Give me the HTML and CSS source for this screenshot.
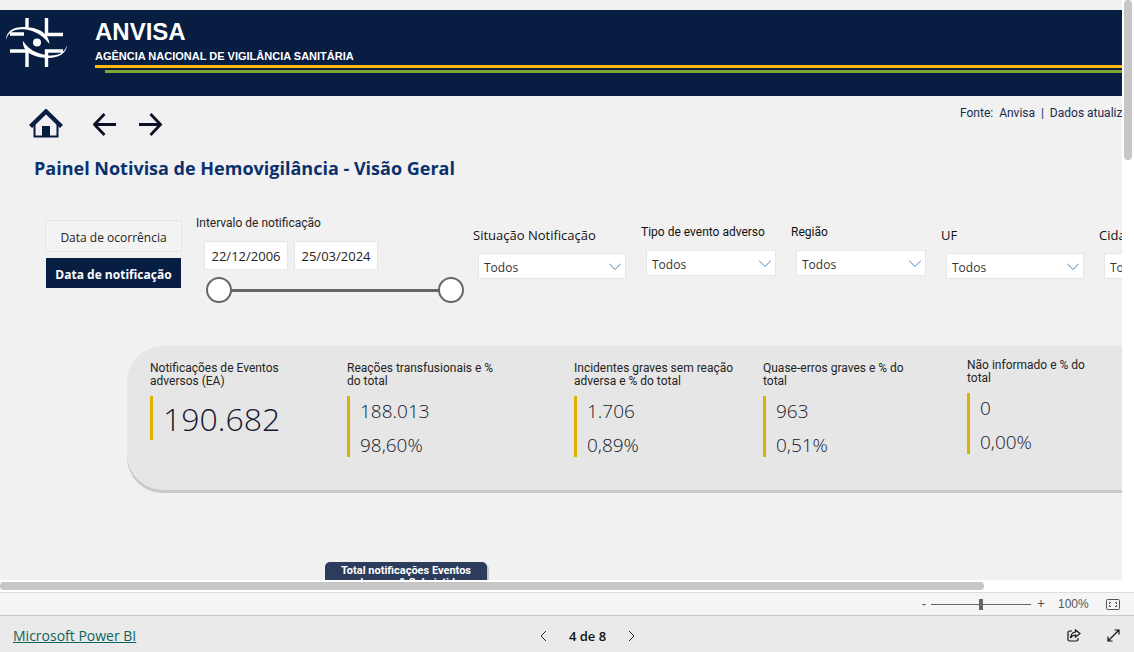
FILE: index.html
```html
<!DOCTYPE html>
<html lang="pt-BR">
<head>
<meta charset="utf-8">
<title>Painel Notivisa de Hemovigilância</title>
<link rel="stylesheet" href="styles.css">
</head>
<body>
<div class="viewer">
  <main class="report">
    <div class="canvas">
      <header class="banner">
        <svg class="logo" viewBox="0 0 64 52" aria-label="Anvisa">
          <g fill="none" stroke="#fff" stroke-width="3.400">
            <path d="M22 2v10M41.500 2v16.500h16.500M5 18h14M5 35h17v16M58 35H41.500v16"/>
          </g>
          <path fill="#fff" d="M1 24C1 15 9 10.500 20 11c13 .5 24 6 24.500 17C38 20 31 15 21 13.500 10 12 3 16 1 24z"/>
          <path fill="#fff" d="M62 29c0 8-9 13.500-20 13-13-.5-25-6-24-17 6 9 13 12 23 14 11 2 19-2 21-10z"/>
          <circle cx="32" cy="26.500" r="4" fill="#fff"/>
        </svg>
        <div class="brand">
          <div class="brand-name">ANVISA</div>
          <div class="brand-sub">AGÊNCIA NACIONAL DE VIGILÂNCIA SANITÁRIA</div>
          <div class="line line-yellow"></div>
          <div class="line line-green"></div>
        </div>
      </header>

      <div class="toolbar">
        <nav class="nav">
          <button class="icon-btn home" aria-label="Início">
            <svg width="34" height="30" viewBox="0 0 34 30"><path d="M5.500 14v13.500h23V14" fill="none" stroke="#071d41" stroke-width="2"/><path d="M1.500 17.500 17 2.500l15.500 15" fill="none" stroke="#071d41" stroke-width="4.400"/><path d="M13 17h8v11h-8z" fill="#071d41"/></svg>
          </button>
          <button class="icon-btn" aria-label="Voltar">
            <svg width="24" height="24" viewBox="0 0 24 24"><path d="M11.500 2 1.500 12.500 11.500 23M2 12.500h21" fill="none" stroke="#0a1026" stroke-width="2.800"/></svg>
          </button>
          <button class="icon-btn" aria-label="Avançar">
            <svg width="24" height="24" viewBox="0 0 24 24"><path d="M11.500 2l10 10.500L11.500 23M0 12.500h21" fill="none" stroke="#0a1026" stroke-width="2.800"/></svg>
          </button>
        </nav>
        <p class="source">Fonte:&nbsp; Anvisa&nbsp; |&nbsp; Dados atualizados em 25/03/2024</p>
      </div>

      <h1 class="title">Painel Notivisa de Hemovigilância - Visão Geral</h1>

      <section class="filters">
        <div class="toggle">
          <button class="toggle-btn">Data de ocorrência</button>
          <button class="toggle-btn active">Data de notificação</button>
        </div>
        <div class="range">
          <label class="din" for="from">Intervalo de notificação</label>
          <div class="dates">
            <input id="from" type="text" value="22/12/2006">
            <input type="text" value="25/03/2024" aria-label="Data final">
          </div>
          <div class="slider">
            <div class="track"></div>
            <input type="range" min="0" max="100" value="0" aria-label="Início do intervalo">
            <input type="range" min="0" max="100" value="100" aria-label="Fim do intervalo">
          </div>
        </div>
        <div class="filter low">
          <label for="f1">Situação Notificação</label>
          <div class="drop"><select id="f1"><option>Todos</option></select><svg class="chev" viewBox="0 0 12 7"><path d="M0 .5l6 6 6-6"/></svg></div>
        </div>
        <div class="filter">
          <label class="din" for="f2">Tipo de evento adverso</label>
          <div class="drop"><select id="f2"><option>Todos</option></select><svg class="chev" viewBox="0 0 12 7"><path d="M0 .5l6 6 6-6"/></svg></div>
        </div>
        <div class="filter">
          <label class="din" for="f3">Região</label>
          <div class="drop"><select id="f3"><option>Todos</option></select><svg class="chev" viewBox="0 0 12 7"><path d="M0 .5l6 6 6-6"/></svg></div>
        </div>
        <div class="filter low">
          <label for="f4">UF</label>
          <div class="drop"><select id="f4"><option>Todos</option></select><svg class="chev" viewBox="0 0 12 7"><path d="M0 .5l6 6 6-6"/></svg></div>
        </div>
        <div class="filter low">
          <label for="f5">Cidade</label>
          <div class="drop"><select id="f5"><option>Todos</option></select><svg class="chev" viewBox="0 0 12 7"><path d="M0 .5l6 6 6-6"/></svg></div>
        </div>
      </section>

      <section class="kpis">
        <div class="kpi"><h2>Notificações de Eventos<br>adversos (EA)</h2><div class="values big"><span>190.682</span></div></div>
        <div class="kpi"><h2>Reações transfusionais e %<br>do total</h2><div class="values"><span>188.013</span><span>98,60%</span></div></div>
        <div class="kpi"><h2>Incidentes graves sem reação<br>adversa e % do total</h2><div class="values"><span>1.706</span><span>0,89%</span></div></div>
        <div class="kpi"><h2>Quase-erros graves e % do<br>total</h2><div class="values"><span>963</span><span>0,51%</span></div></div>
        <div class="kpi raised"><h2>Não informado e % do<br>total</h2><div class="values"><span>0</span><span>0,00%</span></div></div>
      </section>

      <section class="total-card">Total notificações Eventos<br>adversos &amp; Subsistida</section>
    </div>
  </main>
  <div class="vbar"><div class="vthumb"></div></div>
  <div class="hbar"><div class="hthumb"></div></div>
</div>

<div class="zoombar">
  <button class="zoom-btn" aria-label="Diminuir zoom">-</button>
  <input class="zoom" type="range" min="0" max="200" value="100" aria-label="Zoom">
  <button class="zoom-btn plus" aria-label="Aumentar zoom">+</button>
  <span class="percent">100%</span>
  <button class="icon-btn" aria-label="Ajustar à página">
    <svg width="14" height="11" viewBox="0 0 14 11" fill="none" stroke="#555"><rect x=".5" y=".5" width="13" height="10" rx="1"/><path d="M5 3.500H3.500V5M3.500 6v1.500H5M9 3.500h1.500V5M10.500 6v1.500H9"/></svg>
  </button>
</div>

<footer class="footer">
  <a class="pbi" href="#">Microsoft Power BI</a>
  <div class="pager">
    <button class="icon-btn" aria-label="Página anterior"><svg width="7" height="12" viewBox="0 0 7 12"><path d="M6 1 1 6l5 5" fill="none" stroke="#222"/></svg></button>
    <span>4 de 8</span>
    <button class="icon-btn" aria-label="Próxima página"><svg width="7" height="12" viewBox="0 0 7 12"><path d="M1 1l5 5-5 5" fill="none" stroke="#222"/></svg></button>
  </div>
  <div class="actions">
    <button class="icon-btn" aria-label="Compartilhar"><svg width="14" height="13" viewBox="0 0 14 13" fill="none" stroke="#111" stroke-width="1.200"><path d="M5 2H2.500Q1 2 1 3.500v7Q1 12 2.500 12h7q1.500 0 1.500-1.500V9"/><path d="M8.500 1 13 4.500 8.500 8V6Q5.500 6 3.500 9 4 3.500 8.500 3z"/></svg></button>
    <button class="icon-btn" aria-label="Tela cheia"><svg width="13" height="13" viewBox="0 0 13 13" fill="none" stroke="#111" stroke-width="1.200"><path d="M1 12 12 1M7.500 1H12v4.500M1 7.500V12h4.500"/></svg></button>
  </div>
</footer>
</body>
</html>
```

FILE: styles.css
```css
* { box-sizing: border-box; }

body {
  margin: 0;
  height: 100vh;
  display: flex;
  flex-direction: column;
  font: 12px/16px "Open Sans", "Noto Sans", sans-serif;
  color: #252423;
  background: #fff;
}

button, input, select { font: inherit; color: inherit; }
svg { display: block; }
.icon-btn { border: 0; padding: 0; background: none; cursor: pointer; }

/* Report viewport and its scrollbars */
.viewer {
  flex: 1;
  min-height: 0;
  display: grid;
  grid-template: minmax(0, 1fr) 12px / minmax(0, 1fr) 12px;
}
.report { overflow: hidden; background: #f1f1f1; }
.canvas { min-width: 1280px; padding-top: 10px; }
.vbar { padding: 0 2px; }
.vthumb { height: 160px; border-radius: 4px; background: #c6c6c6; }
.hbar { padding: 2px 0; }
.hthumb { width: 87.7%; height: 8px; border-radius: 4px; background: #c6c6c6; }

/* Banner */
.banner {
  display: flex;
  height: 86px;
  padding: 6px 0 0 5px;
  background: #071d41;
  color: #fff;
  font-family: "Liberation Sans", Arial, sans-serif;
}
.logo { width: 64px; height: 52px; margin-right: 26px; }
.brand { flex: 1; }
.brand-name { font-size: 24px; line-height: 32px; font-weight: 700; }
.brand-sub { font-size: 11px; line-height: 16px; font-weight: 700; }
.line { height: 3px; }
.line-yellow { margin-top: 1px; background: #fdb913; }
.line-green { margin: 2px 0 0 10px; background: #82a737; }

/* Navigation */
.toolbar { display: flex; height: 56px; }
.nav { display: flex; align-items: center; gap: 22px; padding-left: 29px; width: 960px; }
.home { margin-right: 8px; }
.source {
  margin: 10px 0 0;
  font: 12px/14px Roboto, sans-serif;
  color: #1a2b50;
  white-space: nowrap;
}
.title {
  margin: 4px 0 0 34px;
  font-size: 18px;
  line-height: 24px;
  font-weight: 700;
  color: #0a316d;
}

/* Filters */
.filters {
  display: grid;
  grid-template-columns: 151px 277px 168px 150px 150px 158px 150px;
  height: 96px;
  margin: 34px 0 0 45px;
}
.din { font-family: Roboto, sans-serif; font-size: 12px; }
.toggle { display: flex; flex-direction: column; gap: 5px; width: 137px; padding-top: 6px; }
.toggle-btn {
  height: 32px;
  padding: 3px 0 0;
  border: 1px solid #e4e4e4;
  background: #f3f3f3;
  font-size: 12px;
  white-space: nowrap;
}
.toggle-btn.active { background: #071d41; color: #fff; font-weight: 700; border-color: #f1f1f1; }
.range { display: flex; flex-direction: column; padding-top: 1px; }
.dates { display: flex; gap: 6px; padding: 10px 0 0 8px; }
.dates input {
  width: 84px;
  height: 29px;
  padding: 1px 0 0;
  border: 1px solid #e6e6e6;
  background: #fff;
  font-size: 13px;
  text-align: center;
}
.slider { display: grid; width: 258px; height: 26px; margin: 7px 0 0 10px; align-items: center; }
.slider > * { grid-area: 1 / 1; }
.track { height: 3px; margin: 0 12px; background: #666; }
.slider input {
  appearance: none;
  width: 100%;
  height: 26px;
  margin: 0;
  background: none;
  pointer-events: none;
}
.slider input::-webkit-slider-thumb {
  appearance: none;
  width: 26px;
  height: 26px;
  border: 2px solid #666;
  border-radius: 50%;
  background: #fff;
  pointer-events: auto;
}
.filter { display: flex; flex-direction: column; padding: 10px 15px 0 0; }
.filter.low { padding-top: 13px; }
.filter label { color: #111; }
.low label { font-size: 13px; }
.drop { display: grid; margin: 10px 0 0 5px; align-items: center; }
.drop > * { grid-area: 1 / 1; }
.drop select {
  appearance: none;
  height: 26px;
  width: 100%;
  padding: 4px 5px 0;
  border: 1px solid #e6e6e6;
  border-radius: 0;
  background: #fff;
  color: #333;
}
.chev { width: 12px; height: 7px; margin-right: 5px; justify-self: end; pointer-events: none; }
.chev path { fill: none; stroke: #4a80b0; }

/* Indicators */
.kpis {
  display: grid;
  grid-template-columns: 197px 227px 189px 204px 1fr;
  height: 147px;
  margin: 36px 0 0 127px;
  padding: 16px 0 0 23px;
  border-radius: 36px 0 0 36px;
  background: #e6e6e6;
  box-shadow: inset 0 -3px #c9c9c9;
}
.kpi h2 {
  margin: 0 0 8px;
  font: 12px/13px Roboto, sans-serif;
  white-space: nowrap;
}
.kpi.raised { margin-top: -3px; }
.values {
  display: flex;
  flex-direction: column;
  height: 61px;
  padding-left: 10px;
  border-left: 3px solid #dbb200;
  color: #14182e;
  font-size: 19px;
  line-height: 30px;
  font-weight: 300;
  gap: 4px;
}
.values.big { height: 44px; font-size: 32px; line-height: 46px; }

.total-card {
  width: 162px;
  height: 40px;
  margin: 69px 0 0 325px;
  padding-top: 3px;
  border-radius: 5px;
  background: #2b3c5c;
  box-shadow: 2px 2px 1px #c6c6c6;
  color: #fff;
  font: 700 11px/12px Roboto, sans-serif;
  text-align: center;
}

/* Zoom bar */
.zoombar {
  display: flex;
  align-items: center;
  justify-content: flex-end;
  height: 24px;
  padding-right: 14px;
  border: solid #c8c8c8;
  border-width: 1px 0;
  border-top-color: #ddd;
  background: #f5f5f5;
  color: #555;
}
.zoom-btn { width: 8px; padding: 0; border: 0; background: none; font-size: 14px; }
.zoom-btn.plus { margin-left: 6px; }
.zoom {
  appearance: none;
  width: 100px;
  height: 12px;
  margin: 0 0 0 3px;
  background: linear-gradient(#666, #666) center / 100% 1px no-repeat;
}
.zoom::-webkit-slider-thumb { appearance: none; width: 4px; height: 11px; background: #666; }
.percent { width: 48px; margin-left: 13px; font-family: "Liberation Sans", Arial, sans-serif; }

/* Footer */
.footer {
  display: grid;
  grid-template-columns: 1fr auto 1fr;
  align-items: center;
  height: 36px;
  padding: 3px 14px 0 13px;
  background: #eaeaea;
}
.pbi { font-size: 14px; color: #0f6459; text-decoration: underline; }
.pager { display: flex; align-items: center; gap: 22px; margin-left: 42px; font-size: 13px; font-weight: 600; color: #111; }
.actions { display: flex; justify-content: flex-end; gap: 26px; }
```
